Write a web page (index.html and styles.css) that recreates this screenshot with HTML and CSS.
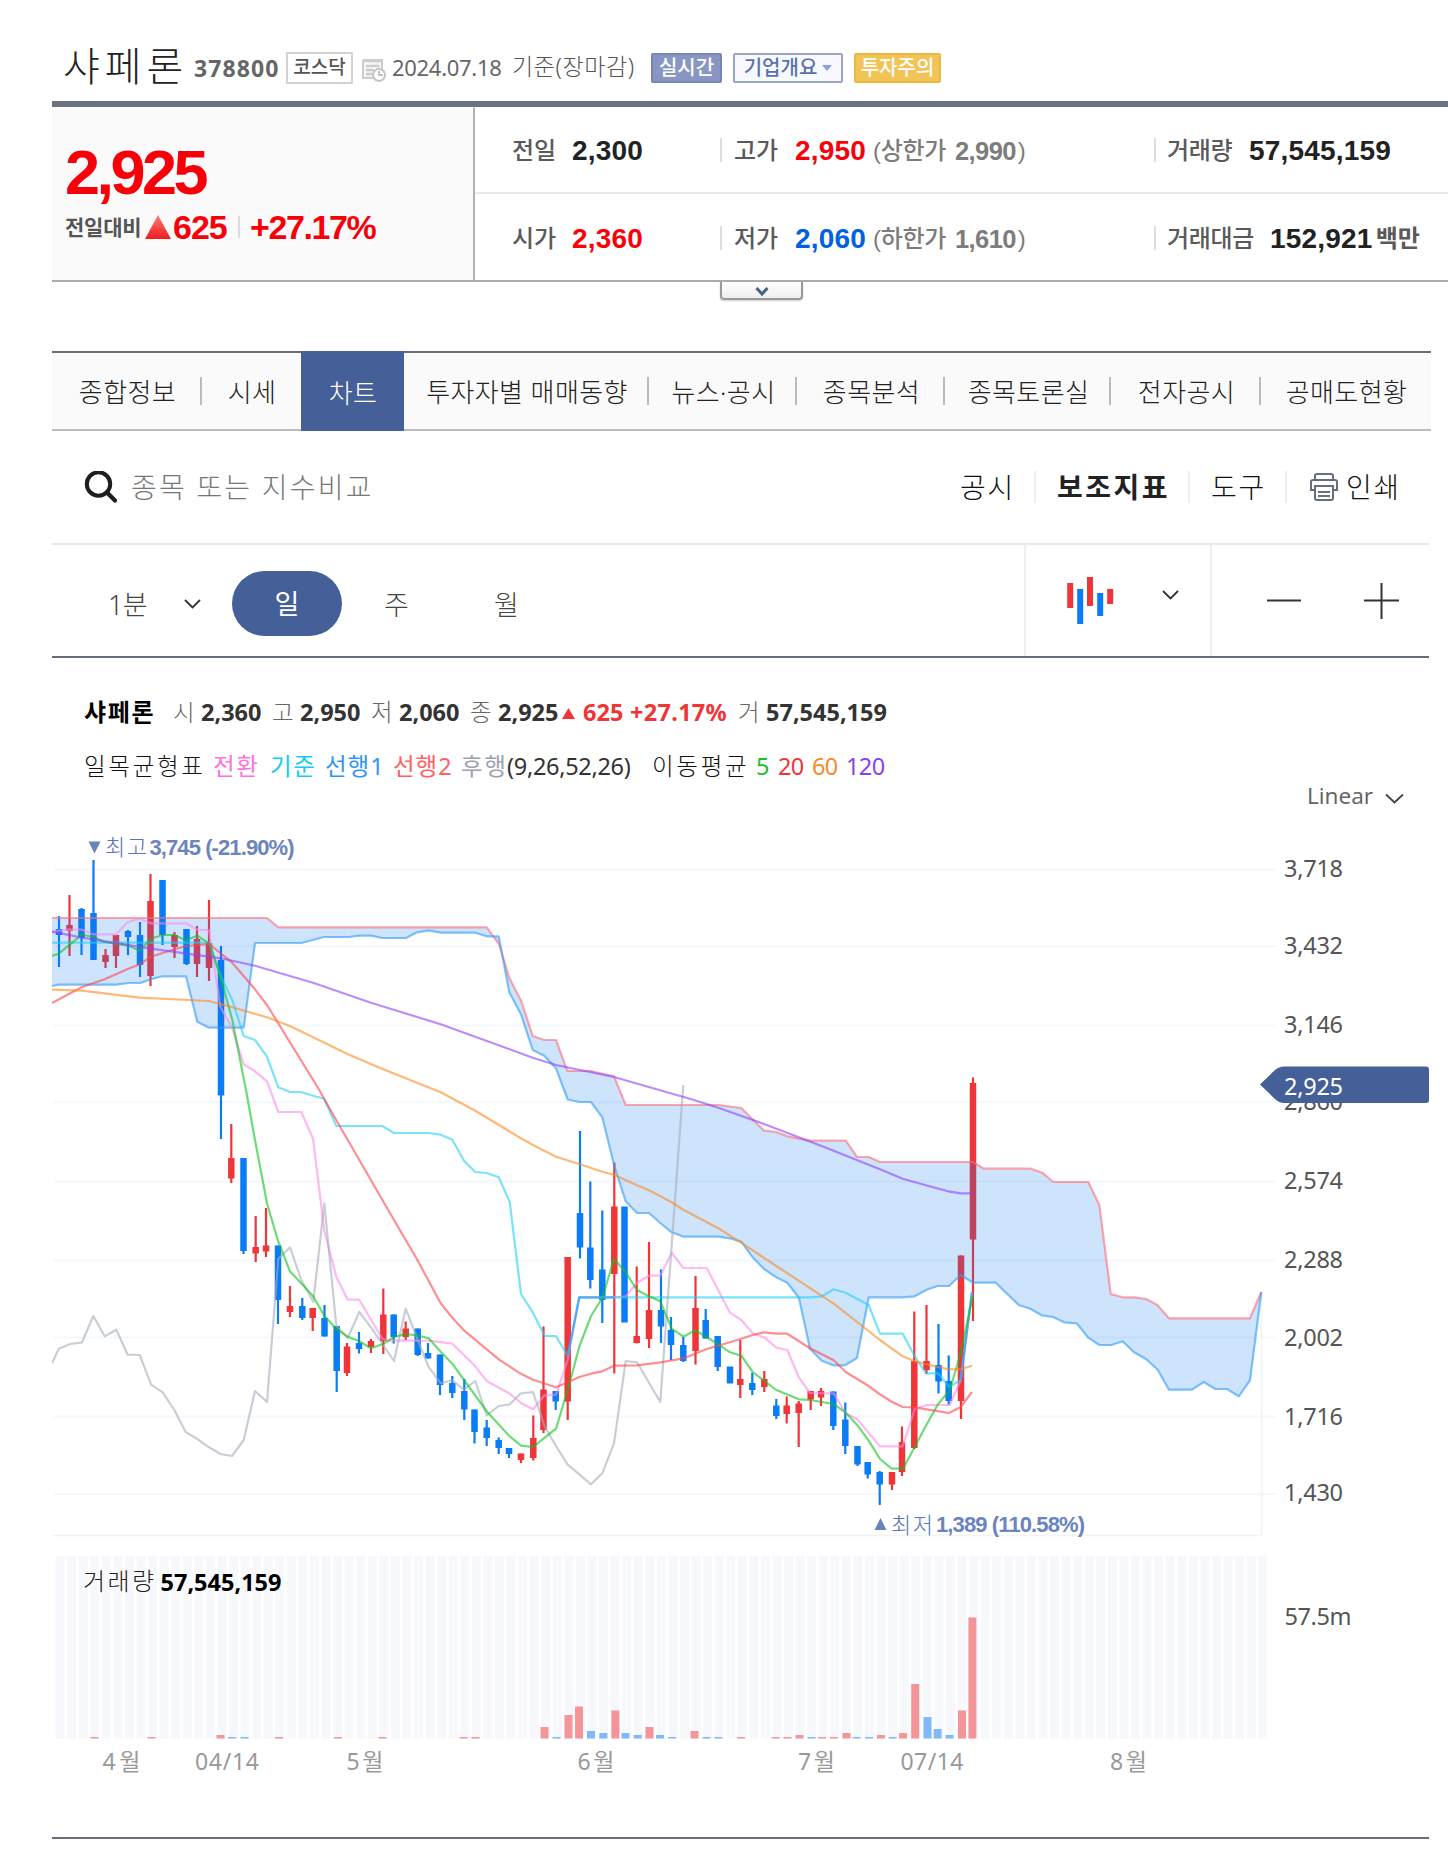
FILE: index.html
```html
<!DOCTYPE html>
<html lang="ko">
<head>
  <meta charset="UTF-8">
  <meta name="viewport" content="width=device-width, initial-scale=1.0">
  <title>샤페론 378800</title>
  <link rel="stylesheet" href="styles.css">
</head>
<body>
  <div class="wrap">
    <header class="company">
      <h1>샤페론</h1>
      <span class="code">378800</span>
      <span class="market">코스닥</span>
      <svg class="ico-date" viewBox="0 0 24 24" width="24" height="24">
        <path d="M1 2h19v11M1 2v18h11" fill="#f4f4f4" stroke="#ccc" stroke-width="2"/>
        <path d="M1 3h19M4 8h13M4 12h8M4 16h6" stroke="#ccc" stroke-width="2.5"/>
        <circle cx="17" cy="17" r="6" fill="#fff" stroke="#c4c4c4" stroke-width="2"/>
        <path d="M17 13v4h4" fill="none" stroke="#c4c4c4" stroke-width="2"/>
      </svg>
      <span class="date">2024.07.18</span>
      <span class="basis">기준(장마감)</span>
      <span class="badge live">실시간</span>
      <span class="badge info">기업개요<i></i></span>
      <span class="badge warn">투자주의</span>
    </header>

    <section class="quote">
      <div class="now">
        <strong class="price">2,925</strong>
        <div class="diff">
          <span class="vs">전일대비</span>
          <svg width="26" height="24" viewBox="0 0 26 24"><defs><linearGradient id="up" x1="0" y1="0" x2="0" y2="1"><stop offset="0" stop-color="#ff7a7a"/><stop offset="1" stop-color="#ee1c1c"/></linearGradient></defs><path d="M13 0L26 24H0z" fill="url(#up)"/></svg>
          <span class="amount">625</span>
          <span class="rate">+27.17%</span>
        </div>
      </div>
      <div class="table">
        <div class="row">
          <div class="cell first"><span class="label">전일</span><b>2,300</b></div>
          <div class="cell mid"><span class="label">고가</span><b class="red">2,950</b><span class="limit">(상한가</span><em>2,990</em><span class="paren">)</span></div>
          <div class="cell last"><span class="label">거래량</span><b>57,545,159</b></div>
        </div>
        <div class="row">
          <div class="cell first"><span class="label">시가</span><b class="red">2,360</b></div>
          <div class="cell mid"><span class="label">저가</span><b class="blue">2,060</b><span class="limit">(하한가</span><em>1,610</em><span class="paren">)</span></div>
          <div class="cell last"><span class="label wide">거래대금</span><b>152,921</b><span class="unit">백만</span></div>
        </div>
      </div>
    </section>
    <div class="more">
      <button class="fold"><svg width="14" height="9" viewBox="0 0 14 9"><path d="M1.5 1l5.5 6 5.5-6" fill="none" stroke="#4a5f8c" stroke-width="3"/></svg></button>
    </div>

    <nav class="tabs">
      <a class="t1"><span>종합정보</span></a>
      <a class="t2"><span>시세</span></a>
      <a class="t3 on"><span>차트</span></a>
      <a class="t4"><span>투자자별 매매동향</span></a>
      <a class="t5"><span>뉴스·공시</span></a>
      <a class="t6"><span>종목분석</span></a>
      <a class="t7"><span>종목토론실</span></a>
      <a class="t8"><span>전자공시</span></a>
      <a class="t9"><span>공매도현황</span></a>
    </nav>

    <div class="search">
      <svg width="33" height="32" viewBox="0 0 33 32"><circle cx="14.500" cy="13" r="11.7" fill="none" stroke="#1e1e1e" stroke-width="4"/><path d="M23 21.500l8 8" stroke="#1e1e1e" stroke-width="4.2" stroke-linecap="round"/></svg>
      <span class="placeholder">종목 또는 지수비교</span>
      <span class="menu m1">공시</span>
      <span class="menu m2">보조지표</span>
      <span class="menu m3">도구</span>
      <span class="menu m4"><svg width="28" height="28" viewBox="0 0 28 28" fill="none" stroke="#666e7b" stroke-width="2"><path d="M5 7V3a2 2 0 0 1 2-2h14a2 2 0 0 1 2 2v4M5 17H1V9a2 2 0 0 1 2-2h22a2 2 0 0 1 2 2v8h-4"/><path d="M5 13h18v12a2 2 0 0 1-2 2H7a2 2 0 0 1-2-2zM8 19h12M8 23h12"/></svg>인쇄</span>
    </div>

    <div class="tools">
      <div class="period">
        <span class="min">1분</span>
        <svg class="chev" width="17" height="10" viewBox="0 0 17 10"><path d="M1 1l7.500 7.500L16 1" fill="none" stroke="#333" stroke-width="1.800"/></svg>
        <span class="day">일</span>
        <span class="week">주</span>
        <span class="month">월</span>
      </div>
      <div class="kind">
        <svg width="47" height="47" viewBox="0 0 47 47"><path d="M3.200 6v25M23 0v29M43.200 12v15" stroke="#f03538" stroke-width="6"/><path d="M13.200 12v35M33.200 16v23" stroke="#0a7cf5" stroke-width="6"/></svg>
        <svg class="chev" width="17" height="10" viewBox="0 0 17 10"><path d="M1 1l7.500 7.500L16 1" fill="none" stroke="#333" stroke-width="1.800"/></svg>
      </div>
      <div class="size">
        <svg width="34" height="36" viewBox="0 0 34 36"><path d="M0 17.500h34" stroke="#333" stroke-width="2"/></svg>
        <svg width="35" height="36" viewBox="0 0 35 36"><path d="M0 17.500h35M17.500 0v36" stroke="#333" stroke-width="2"/></svg>
      </div>
    </div>

    <section class="chart">
      <div class="legend">
        <strong>샤페론</strong>
        <span class="k">시</span><b>2,360</b>
        <span class="k">고</span><b>2,950</b>
        <span class="k">저</span><b>2,060</b>
        <span class="k">종</span><b>2,925</b>
        <b class="chg"><svg width="13" height="11" viewBox="0 0 13 11"><path d="M6.500 0L13 11H0z" fill="#f03538"/></svg>625</b><b class="pct">+27.17%</b>
        <span class="k">거</span><b>57,545,159</b>
      </div>
      <div class="legend ind">
        <span class="ichi">일목균형표</span>
        <span class="conv">전환</span>
        <span class="base">기준</span>
        <span class="lead1">선행1</span>
        <span class="lead2">선행2</span>
        <span class="lag">후행</span><span class="args">(9,26,52,26)</span>
        <span class="ma">이동평균</span>
        <span class="ma5">5</span>
        <span class="ma20">20</span>
        <span class="ma60">60</span>
        <span class="ma120">120</span>
      </div>
      <div class="scale"><span>Linear</span><svg width="19" height="11" viewBox="0 0 19 11"><path d="M1 1.500l8.500 8L18 1.500" fill="none" stroke="#444" stroke-width="1.800"/></svg></div>

      <svg class="plot" width="1396" height="1029" viewBox="52 808 1396 1029">
        <!-- grid -->
        <path class="grid" d="M54 869.500H1276M54 946.300H1276M54 1025.500H1276M54 1102.300H1276M54 1181.500H1276M54 1260.500H1276M54 1337.500H1276M54 1416.500H1276M54 1494H1276"/>
        <path class="frame" d="M52 1535.500H1262M1261.500 1292V1535"/>

        <!-- candles: wick, then body -->
        <path class="wick up" d="M69.500 895V956M105.500 949V968M116 935V968M150.500 874V986M174.500 932V958M197 926V977M209 900V981M231.300 1124V1183M255.700 1216V1262M266 1208V1257M290 1286V1317M312.700 1308V1331M347 1343V1376M371 1339V1353M383.300 1288.500V1354M405.700 1321.500V1340M521 1453.500V1463M533.300 1415.500V1460.500M543.500 1326.500V1433M567.700 1257V1420M614.300 1162.500V1373.500M636.700 1266.500V1343.500M649 1242V1348M695.500 1276V1364.500M740.300 1340V1398M764.300 1371V1392M786.700 1396.500V1423.500M798.700 1401V1447M810.700 1391V1410M821 1388V1406M892 1472V1490M902 1426.500V1476M914.300 1311.500V1449M926.500 1305V1374M961 1255.500V1419M973 1077.500V1321"/>
        <path class="body up" d="M69.500 925V931M105.500 955V962M116 935V956M150.500 901V976M174.500 935V947M197 939V964M209 943V968M231.300 1158V1178.500M255.700 1247V1253.500M266 1245.500V1251.500M290 1306V1312M312.700 1308V1318M347 1346.500V1373M371 1341V1347M383.300 1314.500V1341M405.700 1328.500V1337M521 1453.500V1460M533.300 1438V1458M543.500 1389.500V1430M567.700 1257V1401.500M614.300 1206.500V1274M636.700 1336V1343M649 1310V1339M695.500 1308V1351M740.300 1379V1385M764.300 1379V1387M786.700 1405.500V1414M798.700 1403.500V1413M810.700 1391V1399.500M821 1391V1397.500M892 1472V1484.500M902 1442V1472M914.300 1361V1448M926.500 1361V1370M961 1255.500V1401M973 1083V1239.500"/>
        <path class="wick down" d="M59 916V967M81.500 908V955M93.500 860V960M128 930V955M140 922V977M162.500 880V945M186.500 929V965M221 946V1139M243.500 1158V1254M278 1245.500V1324M302.300 1298V1320M324.500 1305V1336.500M336.700 1326V1392M359 1332V1353.500M393.700 1314.500V1343.500M417.700 1328.500V1356M428 1343V1358.500M440 1354.500V1395M452.300 1376V1398M464.300 1379V1420M474.500 1409.500V1443.500M486.700 1420V1446M498.700 1437.500V1454M509 1448V1458M555.700 1391V1410M580 1131V1258.500M590.300 1181.500V1288.500M602.300 1210.500V1323M661 1269.500V1343M671 1317V1360M683.300 1337V1362M705.700 1309V1338.500M717.700 1336V1371M752.300 1373V1395M776.300 1399V1419M833.300 1391.500V1430M845.300 1402.500V1454M857.500 1446V1466M867.700 1462V1478.500M879.700 1471V1505M938.500 1324V1393.500M948.700 1355.500V1405"/>
        <path class="body down" d="M59 929V935M81.500 909V938M93.500 913V960M128 931V937M140 935V965M162.500 880V935M186.500 929V964M221 960V1095.500M243.500 1158V1251M278 1245.500V1300M302.300 1306V1318M324.500 1318V1336.500M336.700 1326V1371M359 1343V1349M393.700 1314.500V1337M417.700 1328.500V1355M428 1353V1358.500M440 1354.500V1385M452.300 1383V1393M464.300 1391V1409.500M474.500 1409.500V1432M486.700 1427.500V1438M498.700 1440V1448M509 1448V1454M555.700 1391V1401.500M580 1213V1247.500M590.300 1247.500V1280M602.300 1269.500V1300M624.500 1206.500V1322.500M661 1310V1326.500M671 1330V1345M683.300 1345V1361M705.700 1320V1338.500M717.700 1336V1367M730 1366.500V1383.500M752.300 1383V1390M776.300 1405.500V1416M833.300 1391.500V1426M845.300 1419.500V1446M857.500 1446V1464.500M867.700 1462V1474.500M879.700 1472V1484.500M938.500 1365V1381.500M948.700 1381V1401"/>

        <!-- cloud between the two leading spans -->
        <path class="cloud" d="M52 918L267 918L278.300 927.300L486.700 927.300L499 944L509.300 978L521 1000.500L532.700 1036L544.300 1040L556 1040L567.300 1071L590.700 1071L614 1076.300L625.700 1105L718.300 1105L741.300 1108L764 1130.700L776.300 1132L787.300 1136.300L810 1140.700L845.700 1140.700L857 1157L868.700 1157L880 1162L973 1162L984 1168.700L1031 1168.700L1042.300 1172.700L1053.300 1182L1088.300 1182L1099.300 1205L1110.700 1294L1122.700 1297.300L1134.700 1297.300L1146 1299L1157.300 1305L1169 1318.300L1250 1318.300L1261.300 1292L1250 1380.300L1238.700 1396.300L1227 1389L1215.300 1389L1203.700 1382L1192 1389.700L1169 1389.700L1157.700 1369.700L1146 1359L1134 1352.300L1122.700 1341.300L1111.300 1345L1099.300 1345L1088.300 1337.700L1076.700 1323.300L1064.300 1322.300L1053 1317L1041.700 1315.300L1030.300 1308.700L1018.700 1305L995.700 1282.700L973 1282.700L960.700 1275L949 1286L937.700 1286L926.700 1289.700L914.700 1296.300L902.700 1297.300L868.700 1297.300L857 1358L845 1365.300L833.300 1365.300L821.700 1360.700L810 1348.700L799 1298L787.300 1282.700L776.300 1277.300L764 1269L752.700 1257.300L741.300 1241.700L730 1238.300L718.300 1236.700L683.700 1236.700L671.700 1232.300L660.300 1223L649 1213L637 1213L625.700 1201.300L614.300 1166L602.300 1117.300L591 1102L579.300 1102L567.700 1099.500L556 1068.300L544.300 1055.700L532.700 1050L521.300 1015L509.300 992.300L498.700 936.300L486.700 936.300L475.300 932.700L440.700 932.700L428.700 930.300L417 932.300L406 938L382.300 938L371 935.700L360 935.700L348.300 937L324 937L301.300 943L255 943L243.700 1027.700L209 1027.700L197.300 1021.700L186 976.300L162.300 976.300L151 979.300L140.300 983L128.300 983L116.300 984.700L58.700 984.700L52 986z"/>
        <path class="line l-lead2" d="M52 918L267 918L278.300 927.300L486.700 927.300L499 944L509.300 978L521 1000.500L532.700 1036L544.300 1040L556 1040L567.300 1071L590.700 1071L614 1076.300L625.700 1105L718.300 1105L741.300 1108L764 1130.700L776.300 1132L787.300 1136.300L810 1140.700L845.700 1140.700L857 1157L868.700 1157L880 1162L973 1162L984 1168.700L1031 1168.700L1042.300 1172.700L1053.300 1182L1088.300 1182L1099.300 1205L1110.700 1294L1122.700 1297.300L1134.700 1297.300L1146 1299L1157.300 1305L1169 1318.300L1250 1318.300L1261.300 1292"/>
        <path class="line l-lead1" d="M52 986L58.700 984.700L116.300 984.700L128.300 983L140.300 983L151 979.300L162.300 976.300L186 976.300L197.300 1021.700L209 1027.700L243.700 1027.700L255 943L301.300 943L324 937L348.300 937L360 935.700L371 935.700L382.300 938L406 938L417 932.300L428.700 930.300L440.700 932.700L475.300 932.700L486.700 936.300L498.700 936.300L509.300 992.300L521.300 1015L532.700 1050L544.300 1055.700L556 1068.300L567.700 1099.500L579.300 1102L591 1102L602.300 1117.300L614.300 1166L625.700 1201.300L637 1213L649 1213L660.300 1223L671.700 1232.300L683.700 1236.700L718.300 1236.700L730 1238.300L741.300 1241.700L752.700 1257.300L764 1269L776.300 1277.300L787.300 1282.700L799 1298L810 1348.700L821.700 1360.700L833.300 1365.300L845 1365.300L857 1358L868.700 1297.300L902.700 1297.300L914.700 1296.300L926.700 1289.700L937.700 1286L949 1286L960.700 1275L973 1282.700L995.700 1282.700L1018.700 1305L1030.300 1308.700L1041.700 1315.300L1053 1317L1064.300 1322.300L1076.700 1323.300L1088.300 1337.700L1099.300 1345L1111.300 1345L1122.700 1341.300L1134 1352.300L1146 1359L1157.700 1369.700L1169 1389.700L1192 1389.700L1203.700 1382L1215.300 1389L1227 1389L1238.700 1396.300L1250 1380.300L1261.300 1292"/>

        <path class="line l-conv" d="M52 931.700L68.300 929.700L82 929.700L93.300 934.300L116.300 934.300L127.700 922L139.700 918.700L151 923.300L186 923.300L198 930L209 930L220.300 1006.700L232.300 1028.300L243.700 1064.300L255 1071.300L267 1081.300L278.300 1112L301.300 1112L313 1138.700L324.300 1230.700L336.300 1276.700L347.700 1299.700L359.300 1299.700L382.300 1338.700L388.300 1340.700L428.700 1340.700L452.300 1343.700L475.300 1366.300L486.700 1381L509.700 1393.700L521 1403L533 1409.300L544 1395.700L556 1394.700L567.700 1360L579.300 1297.300L614.300 1297.300L625.700 1296.300L637 1282.700L649 1275.700L660.300 1275.700L671.700 1252.700L683.300 1268L706.700 1268L730 1312.700L741.300 1320L752.700 1333.300L764.700 1337.700L776.300 1347.700L787.300 1350L799 1377.700L810 1393L833.700 1393.300L845.700 1413.300L857 1419L880 1446.300L902.700 1446.300L914.700 1409L926.700 1405L949.700 1405L960.700 1380.300L972 1292"/>
        <path class="line l-base" d="M52 942.700L209 942.700L221 976.700L232.300 1000L243.700 1036L255 1040L267 1056.700L278.300 1087.300L290 1092L301.300 1092L313 1095.700L324.300 1098.700L336.300 1126L382.300 1126L394 1133L428.700 1133L440.700 1134.700L452.300 1139.700L464 1160.700L475.300 1172L486.700 1173L498.700 1177.300L509.700 1202L521 1294L533 1312.700L544.700 1336L556 1336L567.700 1356L579.300 1297.300L810 1297.300L822.300 1296.300L833.700 1289.300L845.700 1292.700L868.700 1305L880 1333.700L902.700 1333.700L914.700 1356.300L926 1373.300L938 1373.300L949 1386.700L960.700 1380.300L972 1292"/>
        <path class="line l-lead1" d="M567.700 1356L579.300 1297.300H614M960.700 1380L972 1292"/>
        <path class="line l-lag" d="M52 1363.300L58.700 1348.700L70.300 1344L82 1342.300L93.300 1316L104.700 1336.300L116.300 1329.700L127.700 1354.700L139.700 1355L151 1384.300L162.700 1392.300L174.300 1410L185.700 1432L197.300 1439L209 1447.300L220.700 1454L232 1456L243.700 1440L255 1391L267 1402L278.300 1259L290 1247.300L301.300 1280L313.300 1302L324.300 1203.300L336.300 1325.700L347.700 1338L359.300 1312L371 1327.300L394 1361L405.700 1308.700L417 1338L428.700 1367L440.700 1383.300L452.300 1380.300L464 1389.700L475.300 1381L486.700 1415.300L498.700 1406L509.700 1404.300L521 1393.300L533 1392L544.700 1426.700L556 1446L567.700 1464.700L579.300 1474.300L591 1484.300L602.300 1473.300L614 1443.300L625.700 1361L637 1362.300L660.300 1402L683.300 1085"/>
        <path class="line l-ma5" d="M52 956L58.700 953.700L82 934.700L93.300 937L104.700 942L127.700 945.300L139.700 950.700L151 938.700L162.300 935L174.300 935L186 940.300L197.300 935.700L209.700 944L221 978.300L232.300 1020L246 1090L255 1140L267 1203.300L278.300 1241.700L290 1271.300L313 1296L324.300 1315.700L336.300 1329L347.700 1336.700L359.300 1341.300L371 1348.300L383.700 1343.700L394 1337L405.700 1334L417 1335.300L428.700 1338.300L440.700 1351.700L452.300 1363.700L464 1380L487.300 1412L509.300 1436L521 1445.700L533 1447L544.700 1437.700L556 1428.700L567.700 1390L579.300 1346.700L591 1316L602.300 1298L614 1259L625.700 1272.300L637 1290L649 1296.300L660.300 1301.300L671.700 1328.700L683.300 1336.700L695.300 1330.300L718.300 1344.300L730 1352.300L741.300 1355.700L752.700 1372L776.300 1390L799 1399.300L810 1400L833.700 1404L845.700 1412.700L857 1424.700L868.700 1440.700L880 1459L891.700 1468.700L903.300 1468.300L914.700 1447L926.700 1424.300L938 1404.300L949.700 1390.300L960.700 1353.300L972.700 1296"/>
        <path class="line l-ma20" d="M52 1003L82 987L104.700 979.300L127.700 969L140.300 964L151 956.700L174.300 949.300L186.700 946L209 944L232.300 962.700L255 989.300L267 1005L319.300 1090L324.300 1099.300L359.300 1160L394 1220L417 1259.300L440.700 1303.300L452.300 1317.700L464 1330.300L498.700 1359.300L520 1373.300L533 1379.700L556 1387.300L567.700 1382.300L579.300 1377L591 1373.700L602.300 1371.300L614 1365.700L637 1365.300L660.300 1362.300L683.700 1358.300L706.700 1349L730 1342.300L752.700 1335L764 1332.300L776.300 1333.700L787.300 1333.700L810 1348.300L833.700 1360.300L845.700 1372L868.700 1386L880 1394.300L891.700 1401.700L902.700 1407L914.700 1407.300L926.700 1409.300L949 1413L960.700 1407L972 1392"/>
        <path class="line l-ma60" d="M52 989.700L82 990.700L139.700 997.700L209 1001L232.300 1007.300L267 1017.300L290 1026L348 1054.300L382 1068.700L440.700 1092.300L475.300 1110.700L520 1137.700L533 1145L556 1156.700L579.300 1164L602.300 1171.700L614 1174.700L637 1185.300L649 1190.300L671.700 1202.300L683.300 1209.700L718.300 1228.300L741.300 1242.700L776.300 1266L833.700 1303.700L880 1340L902.700 1356.300L914.700 1361.300L938 1367L949 1369.300L960.700 1369.300L972 1365.700"/>
        <path class="line l-ma120" d="M52 931.700L82 937.700L151 948.700L221 958.300L255 965.700L313 982.700L371 1002.700L440.700 1024.300L500 1045.700L532.700 1057.700L556 1065L614 1077L694 1100L718.300 1107.700L764 1124L822.300 1146.300L880 1169.300L902.700 1178.700L926.700 1185.500L950 1191.700L960.700 1193.300L972.700 1193.300"/>

        <!-- high / low marks -->
        <path class="mark" d="M88.500 841.500h12l-6 12zM874.500 1530h12l-6-12z"/>
        <text class="mk" x="105" y="855" textLength="42">최고</text>
        <text class="mv" x="149.500" y="854.500" textLength="145">3,745 (-21.90%)</text>
        <text class="mk" x="891" y="1532.500" textLength="42">최저</text>
        <text class="mv" x="936" y="1532" textLength="149">1,389 (110.58%)</text>

        <!-- price axis -->
        <g class="axis">
          <text x="1284" y="877" textLength="59">3,718</text>
          <text x="1284" y="954" textLength="59">3,432</text>
          <text x="1284" y="1033" textLength="59">3,146</text>
          <text x="1284" y="1110" textLength="59">2,860</text>
          <text x="1284" y="1189" textLength="59">2,574</text>
          <text x="1284" y="1268" textLength="59">2,288</text>
          <text x="1284" y="1345.500" textLength="59">2,002</text>
          <text x="1284" y="1424.500" textLength="59">1,716</text>
          <text x="1284" y="1500.500" textLength="59">1,430</text>
          <text x="1284.500" y="1625" textLength="67">57.5m</text>
        </g>
        <path class="flag" d="M1260 1084.500L1275 1070Q1279 1066.500 1284 1066.500H1426Q1429 1066.500 1429 1069.500V1100Q1429 1103 1426 1103H1284Q1279 1103 1275 1099z"/>
        <text class="flag-text" x="1284" y="1094.500" textLength="59">2,925</text>

        <!-- volume -->
        <path class="stripes" d="M55.500 1647.200H1267"/>
        <path class="vol up" d="M94.500 1737V1738.500M151.500 1737V1738.500M220.500 1735V1738.500M279 1737V1738.500M338 1737V1738.500M382.500 1737V1738.500M463.500 1737V1738.500M475.500 1737V1738.500M544.500 1727V1738.500M568.500 1715V1738.500M579 1706.500V1738.500M615.400 1710.500V1738.500M649.500 1727V1738.500M694.500 1731V1738.500M741 1737V1738.500M775.500 1737V1738.500M787.500 1737V1738.500M799.500 1735V1738.500M822 1737V1738.500M834 1737V1738.500M846.500 1733V1738.500M881 1735V1738.500M903 1733V1738.500M915.200 1684V1738.500M962 1710.500V1738.500M972.400 1617.500V1738.500"/>
        <path class="vol down" d="M232 1737V1738.500M244.500 1737V1738.500M556.500 1737V1738.500M591 1731V1738.500M603.400 1733V1738.500M625.400 1733V1738.500M637.700 1735V1738.500M660 1735V1738.500M672 1737V1738.500M706.500 1737V1738.500M718.500 1737V1738.500M811.500 1737V1738.500M856.500 1737V1738.500M869 1737V1738.500M892.700 1737V1738.500M927.500 1717V1738.500M937.600 1729V1738.500M949.500 1735V1738.500"/>
        <text class="vk" x="83" y="1590" textLength="71">거래량</text>
        <text class="vv" x="160.500" y="1591" textLength="121">57,545,159</text>

        <g class="months">
          <text x="102.500" y="1769.500" textLength="38">4월</text>
          <text x="195" y="1769.500" textLength="64">04/14</text>
          <text x="346.500" y="1769.500" textLength="37">5월</text>
          <text x="577.500" y="1769.500" textLength="37">6월</text>
          <text x="798" y="1769.500" textLength="37">7월</text>
          <text x="900.500" y="1769.500" textLength="63">07/14</text>
          <text x="1110" y="1769.500" textLength="37">8월</text>
        </g>
      </svg>
    </section>
  </div>
</body>
</html>
```
FILE: styles.css
```css
* {
  box-sizing: border-box;
}
body {
  margin: 0;
  background: #fff;
  color: #222;
  font-family: "Noto Sans", "Noto Sans CJK KR", sans-serif;
  overflow: hidden;
}
.wrap {
  width: 1448px;
  padding-left: 52px;
}
span, b, strong, em, h1, a {
  white-space: nowrap;
  flex: none;
}

/* company header */
.company {
  display: flex;
  align-items: center;
  height: 101px;
  padding: 34px 0 0 11px;
}
.company h1 {
  width: 131px;
  margin: 0;
  padding-bottom: 3px;
  font-size: 40px;
  font-weight: 300;
  line-height: 40px;
  letter-spacing: 5px;
}
.code {
  width: 92px;
  font-size: 23px;
  font-weight: 700;
  line-height: 30px;
  letter-spacing: 1.1px;
  color: #666;
}
.market {
  width: 67px;
  height: 32px;
  border: 2px solid #d3d3d3;
  font-size: 19px;
  font-weight: 500;
  line-height: 27px;
  text-align: center;
  color: #555;
}
.ico-date {
  margin: 5px 6px 0 9px;
}
.date {
  width: 120px;
  padding-bottom: 2px;
  font-size: 22px;
  font-weight: 400;
  line-height: 30px;
  letter-spacing: -0.3px;
  color: #666;
}
.basis {
  width: 139px;
  padding-bottom: 3px;
  font-size: 23px;
  font-weight: 300;
  line-height: 30px;
  letter-spacing: 0.6px;
  color: #555;
}
.badge {
  height: 30px;
  border: 2px solid;
  border-radius: 2px;
  font-size: 20px;
  font-weight: 500;
  line-height: 25px;
  text-align: center;
}
.live {
  width: 71px;
  background: #8996c3;
  border-color: #7685b8;
  color: #fff;
}
.info {
  width: 110px;
  margin-left: 11px;
  background: #f7f9ff;
  border-color: #9aa5cb;
  color: #5d70ac;
}
.info i {
  display: inline-block;
  margin: 0 0 4px 5px;
  border: 5px solid transparent;
  border-top: 6px solid #8ea0d6;
  border-bottom: 0;
}
.warn {
  width: 87px;
  margin-left: 11px;
  background: #f2c355;
  border-color: #ebb840;
  color: #fff;
}

/* price summary */
.quote {
  display: flex;
  height: 181px;
  border-top: 6px solid #69727f;
  border-bottom: 2px solid #a9abae;
  font-family: "Liberation Sans", "Noto Sans CJK KR", sans-serif;
}
.now {
  width: 423px;
  padding: 31px 0 0 13px;
  background: #fafafa;
  border-right: 2px solid #b1b2b6;
  border-top: 1px solid #fff;
}
.price {
  display: block;
  font-size: 63px;
  line-height: 66px;
  letter-spacing: -3.500px;
  color: #f8000a;
}
.diff {
  display: flex;
  align-items: center;
  height: 38px;
  margin-top: 3px;
  font-size: 34px;
  font-weight: 700;
  line-height: 38px;
  letter-spacing: -1px;
  color: #f8000a;
}
.vs {
  width: 80px;
  padding-top: 2px;
  font-size: 21px;
  letter-spacing: -0.200px;
  color: #555;
}
.amount {
  width: 67px;
  padding-left: 2px;
}
.rate {
  padding-left: 12px;
  background: linear-gradient(#ddd, #ddd) 0 center / 2px 22px no-repeat;
  letter-spacing: -1.400px;
}
.table {
  flex: 1;
}
.row {
  display: flex;
  align-items: center;
  height: 87px;
}
.row:first-child {
  border-bottom: 2px solid #e9e9e9;
}
.cell {
  display: flex;
  align-items: center;
  height: 24px;
  font-size: 28px;
  line-height: 32px;
  letter-spacing: 0.200px;
  border-left: 2px solid #ddd;
}
.cell > * {
  padding-top: 2px;
}
.first {
  width: 245px;
  padding-left: 35px;
  border-color: transparent;
}
.mid {
  width: 434px;
  padding-left: 12px;
}
.last {
  padding-left: 11px;
}
.label, .limit, .paren, .unit {
  font-size: 24px;
  font-weight: 500;
  color: #5a5a5a;
  letter-spacing: 0;
}
.label {
  width: 61px;
}
.first .label {
  width: 60px;
}
.last .label {
  width: 82px;
  letter-spacing: -0.300px;
}
.last .wide {
  width: 103px;
}
.mid b {
  width: 78px;
}
.limit, .paren {
  color: #7c7c7c;
}
.limit {
  width: 82px;
  letter-spacing: -0.300px;
}
.cell em {
  font-size: 25.500px;
  font-style: normal;
  font-weight: 700;
  letter-spacing: -0.600px;
  color: #7c7c7c;
}
.paren {
  margin-left: 2px;
}
.unit {
  margin-left: 3px;
  font-weight: 700;
}
.red {
  color: #fb0007;
}
.blue {
  color: #0060e6;
}
.more {
  height: 69px;
  padding-left: 668px;
}
.fold {
  display: block;
  width: 83px;
  height: 18px;
  padding: 3px 0 0;
  border: 2px solid #999;
  border-top: 0;
  border-radius: 0 0 4px 4px;
  background: linear-gradient(#fff, #eee);
  box-shadow: 0 1px 2px #ccc;
  line-height: 0;
}

/* tabs */
.tabs {
  display: flex;
  align-items: center;
  width: 1379px;
  height: 80px;
  background: #fafafa;
  border-top: 2px solid #656e79;
  border-bottom: 2px solid #bcbcbc;
  font-size: 26px;
  font-weight: 300;
  letter-spacing: 0.400px;
}
.tabs span {
  display: block;
  height: 28px;
  padding: 1px 0 0 3px;
  border-right: 2px solid #bbb;
  line-height: 28px;
  text-align: center;
}
.tabs .t2 span, .tabs .t9 span, .tabs .on span {
  border-color: transparent;
}
.t1 { width: 150px; }
.t2 { width: 99px; }
.t3 { width: 103px; }
.t4 { width: 245px; }
.t5 { width: 148px; }
.t6 { width: 148px; }
.t7 { width: 166px; }
.t8 { width: 150px; }
.t9 { width: 170px; }
.on {
  height: 80px;
  padding-top: 27px;
  background: #455f99;
  color: #fff;
}

/* search row */
.search {
  display: flex;
  align-items: center;
  width: 1377px;
  height: 114px;
  padding-left: 32px;
  border-bottom: 2px solid #eaeaea;
  font-size: 28px;
  font-weight: 400;
  line-height: 32px;
}
.placeholder {
  width: 814px;
  margin-left: 14px;
  font-weight: 300;
  letter-spacing: 2.200px;
  color: #777;
}
.menu {
  border-right: 2px solid #eceff5;
  letter-spacing: 1.800px;
  font-weight: 300;
  color: #111;
}
.m1 { width: 91px; padding-left: 15px; }
.m2 { width: 154px; padding-left: 21px; font-weight: 700; letter-spacing: 2.500px; color: #222; }
.m3 { width: 97px; padding-left: 21px; }
.m4 {
  display: flex;
  align-items: center;
  gap: 8px;
  padding-left: 23px;
  border: 0;
}

/* period / chart tools */
.tools {
  display: flex;
  width: 1377px;
  height: 113px;
  border-bottom: 2px solid #656e7a;
}
.period {
  display: flex;
  align-items: center;
  width: 972px;
  padding-left: 56px;
  font-size: 27px;
  font-weight: 300;
  line-height: 34px;
  color: #444;
}
.min {
  width: 76px;
  letter-spacing: -0.700px;
}
.day {
  width: 110px;
  height: 65px;
  margin: 6px 0 0 31px;
  border-radius: 33px;
  background: #455f99;
  color: #fff;
  font-weight: 400;
  line-height: 65px;
  text-align: center;
}
.min, .week, .month {
  margin-top: 8px;
}
.period .chev {
  margin-top: 6px;
}
.week {
  width: 110px;
  margin-left: 42px;
}
.kind {
  display: flex;
  width: 188px;
  padding: 32px 0 0 41px;
  border-left: 2px solid #eceff5;
  border-right: 2px solid #eceff5;
}
.kind .chev {
  margin: 13px 0 0 48px;
}
.size {
  display: flex;
  gap: 63px;
  padding: 38px 0 0 55px;
}

/* chart legend */
.chart {
  width: 1396px;
  height: 1181px;
  padding-top: 36px;
  background: linear-gradient(#666d79, #666d79) 0 bottom / 1377px 2px no-repeat;
}
.legend {
  display: flex;
  align-items: center;
  height: 36px;
  padding-left: 32px;
  font-size: 23.500px;
  line-height: 36px;
}
.legend strong {
  width: 89px;
  font-size: 24px;
  letter-spacing: 1.700px;
  color: #000;
}
.legend b {
  width: 71px;
  letter-spacing: 0;
  color: #333;
}
.legend .k {
  width: 28px;
  font-weight: 300;
  color: #666;
}
.legend .chg {
  width: 68px;
  margin-left: -7px;
  color: #f03538;
}
.legend .chg svg {
  margin: 0 8px 2px 0;
}
.legend .pct {
  width: 108px;
  letter-spacing: 0.300px;
  color: #f03538;
}
.ind {
  margin-top: 18px;
  font-weight: 300;
  letter-spacing: 1.600px;
}
.ichi { width: 129px; color: #111; letter-spacing: 2.700px; }
.conv { width: 57px; color: #ff6fe0; }
.base { width: 55px; color: #12cdf0; }
.lead1 { width: 68px; color: #3395f5; }
.lead2 { width: 68px; color: #ff6164; }
.lag { width: 46px; color: #9aa2b2; }
.lead1, .lead2 { letter-spacing: 1px; }
.conv, .base, .lead1, .lead2, .lag { font-weight: 400; }
.args { width: 145px; color: #333; letter-spacing: -0.300px; font-weight: 400; }
.ma { width: 104px; color: #111; letter-spacing: 2.700px; }
.ma5, .ma20, .ma60, .ma120 { font-weight: 400; letter-spacing: -0.600px; }
.ma5 { width: 22px; color: #1fbf2a; }
.ma20 { width: 34px; color: #f03538; }
.ma60 { width: 34px; color: #f58a2c; }
.ma120 { color: #8a3ff0; }
.scale {
  display: flex;
  align-items: center;
  height: 24px;
  padding-left: 1255px;
  font-size: 22.500px;
  line-height: 24px;
  color: #666;
}
.scale span {
  width: 78px;
}
.scale svg {
  margin-top: 4px;
}

/* plot */
.plot {
  display: block;
}
.grid {
  fill: none;
  stroke: #f4f7fb;
  stroke-width: 2;
}
.frame {
  fill: none;
  stroke: #f2f3f5;
  stroke-width: 1.500;
}
.wick {
  stroke-width: 2.200;
}
.body {
  stroke-width: 6.500;
}
.up {
  stroke: #f03538;
}
.down {
  stroke: #0a7cf5;
}
.cloud {
  fill: rgba(10, 120, 243, 0.2);
}
.line {
  fill: none;
  stroke-width: 2.200;
  stroke-linejoin: round;
  opacity: 0.6;
}
.l-lead1 { stroke: #2f9bf7; }
.l-lead2 { stroke: #ff6b78; }
.l-conv { stroke: #ff8aea; }
.l-base { stroke: #20d0f5; }
.l-lag { stroke: #a5adbb; }
.l-ma5 { stroke: #0cc41c; }
.l-ma20 { stroke: #ff4248; }
.l-ma60 { stroke: #fb8a1e; }
.l-ma120 { stroke: #9040ff; }
.mark {
  fill: #6a83bd;
}
.mk {
  font-size: 22px;
  font-weight: 300;
  fill: #5a74b4;
}
.mv {
  font-family: "Liberation Sans", sans-serif;
  font-size: 22px;
  font-weight: 700;
  fill: #6c84be;
}
.axis {
  font-size: 23.500px;
  fill: #555;
}
.flag {
  fill: #455f99;
}
.flag-text {
  font-size: 23.500px;
  fill: #fff;
}
.stripes {
  stroke: #f7f8fc;
  stroke-width: 183;
  stroke-dasharray: 9 2.565;
}
.vol {
  stroke-width: 8;
  opacity: 0.5;
}
.vk {
  font-size: 24px;
  font-weight: 300;
  fill: #222;
}
.vv {
  font-size: 23.500px;
  font-weight: 700;
  fill: #000;
}
.months {
  font-size: 23px;
  fill: #999;
}
```
